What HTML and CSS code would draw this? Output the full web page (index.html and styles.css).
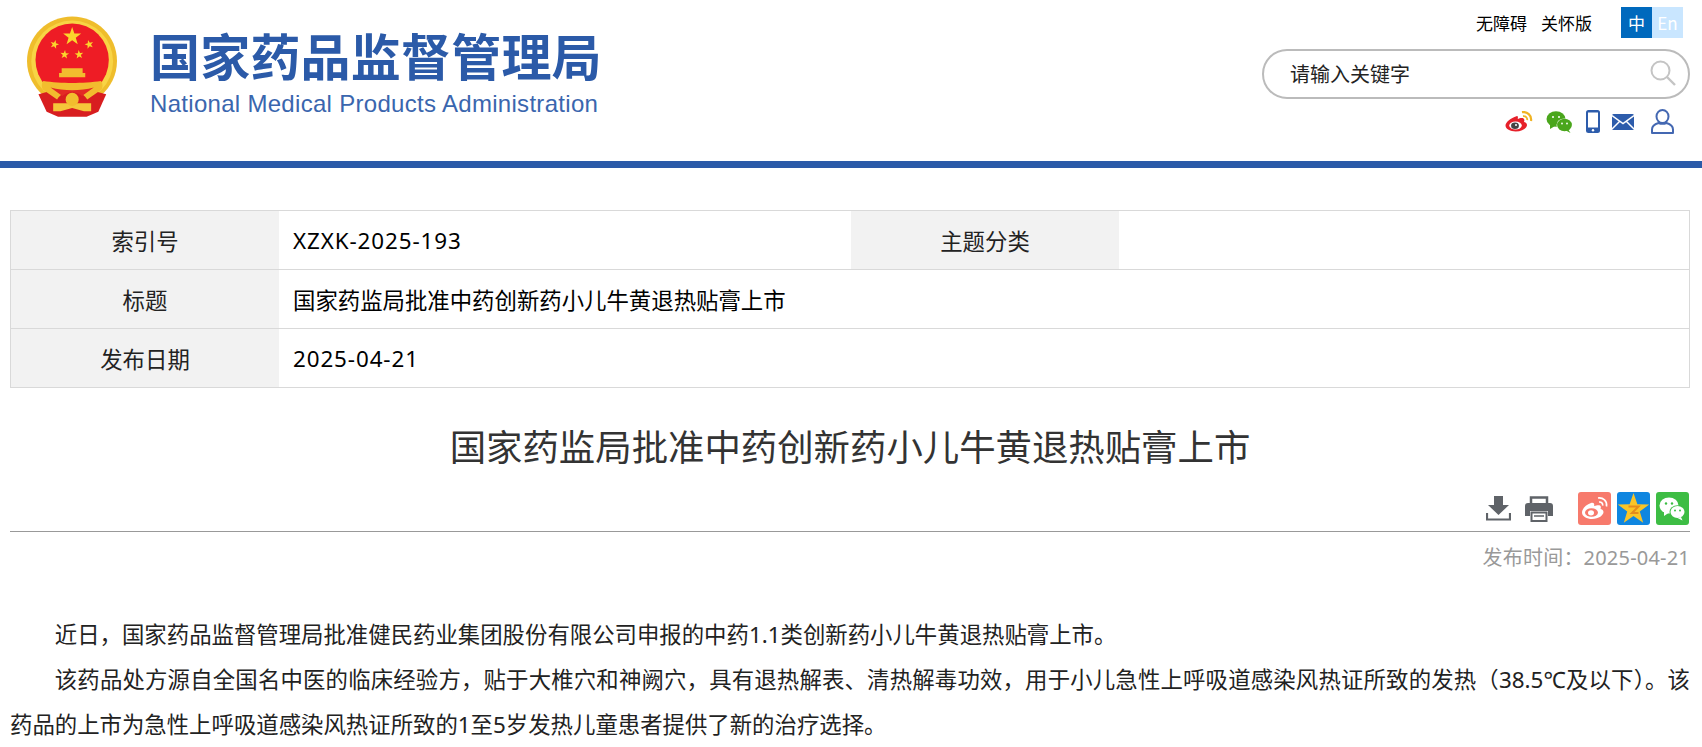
FILE: index.html
```
<!DOCTYPE html>
<html lang="zh-CN">
<head>
  <meta charset="utf-8">
  <title>国家药监局批准中药创新药小儿牛黄退热贴膏上市</title>
  <link rel="stylesheet" href="styles.css">
</head>
<body>
  <svg class="defs" width="0" height="0">
    <defs>
      <polygon id="star" points="0,-10 2.35,-3.24 9.51,-3.09 3.8,1.24 5.88,8.09 0,4 -5.88,8.09 -3.8,1.24 -9.51,-3.09 -2.35,-3.24"/>
    </defs>
  </svg>

  <div class="header">
    <div class="logo">
      <svg class="emblem" viewBox="40 38 275 307">
        <path d="M178 39c76 0 137 60 137 136 0 44-20 80-48 104H89c-28-24-49-60-49-104 0-76 62-136 138-136z" fill="#efbd2c"/>
        <circle cx="178" cy="176" r="125" fill="#f8d445"/>
        <circle cx="178" cy="172" r="112" fill="#ee1c25"/>
        <use href="#star" transform="translate(178,100) scale(2.9)" fill="#fbd62c"/>
        <use href="#star" transform="translate(124,124) scale(1.4) rotate(15)" fill="#fbd62c"/>
        <use href="#star" transform="translate(230,124) scale(1.4) rotate(-15)" fill="#fbd62c"/>
        <use href="#star" transform="translate(155,155) scale(1.4) rotate(5)" fill="#fbd62c"/>
        <use href="#star" transform="translate(199,155) scale(1.4) rotate(-5)" fill="#fbd62c"/>
        <path d="M146 197h64v14h8v13h-80v-13h8z" fill="#f2bd2e"/>
        <path d="M75 276 L100 330 L135 345 L222 345 L258 330 L282 276 L250 268 L178 262 L106 268Z" fill="#d81e20"/>
        <path d="M90 236c25 4 60 6 88 6s63-2 88-6c6 6 6 18 2 26l-44 30c-8-14-26-24-46-24s-38 10-46 24l-44-30c-4-8-4-20 2-26z" fill="#f2bd2e"/>
        <path d="M112 256c20 6 44 8 66 8s46-2 66-8l-36 26c-8-8-18-12-30-12s-22 4-30 12z" fill="#e32a25"/>
        <path d="M120 304h116v24h-22l-36-10-36 10h-22z" fill="#f5c73a"/>
        <circle cx="178" cy="292" r="20" fill="#f2bd2e"/>
      </svg>
      <div class="logo-text">
        <div class="logo-cn">国家药品监督管理局</div>
        <div class="logo-en">National Medical Products Administration</div>
      </div>
    </div>

    <div class="tools">
      <div class="top-links">
        <a>无障碍</a>
        <a>关怀版</a>
        <div class="lang">
          <span class="lang-cn">中</span><span class="lang-en">En</span>
        </div>
      </div>
      <div class="search">
        <span>请输入关键字</span>
        <svg class="search-icon" viewBox="0 0 26 26">
          <circle cx="10.5" cy="10.5" r="9" fill="none" stroke="#c4c4c4" stroke-width="2"/>
          <path d="M17 17l8 8" stroke="#c4c4c4" stroke-width="2.4"/>
        </svg>
      </div>
      <div class="social">
        <svg class="ico-weibo" viewBox="0 0 28 21">
          <path d="M11.5 5.2C6 6.800 .5 11 .5 14.600c0 3.600 5 5.900 10.200 5.900 6.800 0 11.300-3.600 11.300-6.600 0-2-2-2.700-3-3 .6-1.500.5-2.700-.4-3.400-1.500-1-4-.3-5.500.4-.3.100-.4 0-.3-.4.400-1.800-.3-3.100-1.300-2.300z" fill="#e6202a"/>
          <ellipse cx="10.500" cy="14.500" rx="6.300" ry="4" fill="#fff"/>
          <ellipse cx="10" cy="14.800" rx="3.900" ry="3.200" fill="#444"/>
          <circle cx="11" cy="14" r="1" fill="#fff"/>
          <path d="M17 1.200c5-.9 10 3 9 8.800" fill="none" stroke="#f0b323" stroke-width="2.200"/>
          <path d="M18 5.200c2.500-.4 4.600 1.500 4.200 4" fill="none" stroke="#f0b323" stroke-width="1.800"/>
        </svg>
        <svg class="ico-wechat" viewBox="0 0 27 22">
          <ellipse cx="10" cy="8" rx="9.500" ry="7.800" fill="#4aa61c"/>
          <path d="M4 13l0 5 5-3z" fill="#4aa61c"/>
          <ellipse cx="18.500" cy="14" rx="8" ry="6.600" fill="#fff"/>
          <ellipse cx="18.500" cy="14" rx="7.400" ry="6.200" fill="#4aa61c"/>
          <path d="M22 18l2.500 4-5.500-3z" fill="#4aa61c"/>
          <circle cx="7" cy="6" r="1" fill="#fff"/><circle cx="13" cy="6" r="1" fill="#fff"/>
          <circle cx="16" cy="12.500" r=".9" fill="#fff"/><circle cx="21" cy="12.500" r=".9" fill="#fff"/>
        </svg>
        <svg class="ico-phone" viewBox="0 0 14 23">
          <rect width="14" height="23" rx="2.500" fill="#2d5cab"/>
          <rect x="2" y="2.500" width="10" height="15" fill="#fff"/>
          <circle cx="7" cy="20.200" r="1.200" fill="#fff"/>
        </svg>
        <svg class="ico-mail" viewBox="0 0 22 16">
          <rect width="22" height="16" rx="1.500" fill="#2d5cab"/>
          <path d="M0 1.500l11 8 11-8M0 15l7.500-7.500M22 15l-7.500-7.500" fill="none" stroke="#fff" stroke-width="1.500"/>
        </svg>
        <svg class="ico-user" viewBox="0 0 23 25">
          <ellipse cx="11.500" cy="7.500" rx="6" ry="6.500" fill="none" stroke="#4468b2" stroke-width="2"/>
          <path d="M1 24v-3.500c0-3.500 3-5.500 6.500-6.500 2.500 1 5.500 1 8 0 3.500 1 6.500 3 6.500 6.500V24z" fill="none" stroke="#4468b2" stroke-width="2" stroke-linejoin="round"/>
        </svg>
      </div>
    </div>
  </div>

  <div class="main">
    <table class="info">
      <tr>
        <td class="label">索引号</td>
        <td class="value col-one latin">XZXK-2025-193</td>
        <td class="label">主题分类</td>
        <td class="value"></td>
      </tr>
      <tr>
        <td class="label">标题</td>
        <td class="value" colspan="3">国家药监局批准中药创新药小儿牛黄退热贴膏上市</td>
      </tr>
      <tr>
        <td class="label">发布日期</td>
        <td class="value latin" colspan="3">2025-04-21</td>
      </tr>
    </table>

    <h1 class="title">国家药监局批准中药创新药小儿牛黄退热贴膏上市</h1>

    <div class="share">
      <svg class="ico-down" viewBox="0 0 25 25">
        <path d="M8 0h9v9h6L12.500 19 2 9h6z" fill="#5f6368"/>
        <path d="M1 17v6.500h23V17" fill="none" stroke="#5f6368" stroke-width="2.200"/>
      </svg>
      <svg class="ico-print" viewBox="0 0 28 26">
        <path d="M6 7V1.500h16V7" fill="none" stroke="#5f6368" stroke-width="2.500"/>
        <path d="M3 7h22a3 3 0 0 1 3 3v10h-5v-5H5v5H0V10a3 3 0 0 1 3-3z" fill="#5f6368"/>
        <rect x="6.500" y="16.500" width="15" height="8.500" fill="#fff" stroke="#5f6368" stroke-width="2"/>
        <path d="M9 20h10" stroke="#5f6368" stroke-width="1.500"/>
      </svg>
      <div class="tiles">
        <span class="tile tile-weibo">
          <svg viewBox="0 0 33 33">
            <path d="M13 11C8 12.500 4 17 4 20.500 4 24.500 9 27 14 27c7 0 11.500-4 11.500-7 0-2-2-2.800-3-3 .6-1.500.5-3-.5-3.500-1.500-.8-4 0-5.500.5-.3.100-.4-.1-.3-.5.400-2-1-3.500-3.200-2.500z" fill="#fff"/>
            <ellipse cx="13.500" cy="20.500" rx="6.500" ry="4.300" fill="#f77a6c"/>
            <ellipse cx="13" cy="20.800" rx="3" ry="2.600" fill="#fff"/>
            <path d="M20 6c5-.7 9.500 3 8.500 8.500M21 10c2.500-.3 4 1.500 3.700 3.700" fill="none" stroke="#fff" stroke-width="1.600"/>
          </svg>
        </span>
        <span class="tile tile-qzone">
          <svg viewBox="0 0 33 33">
            <use href="#star" transform="translate(16.500,17.500) scale(1.650)" fill="#f9c528"/>
            <path d="M11.500 14.500h10l-6.500 6.500h6.500" fill="none" stroke="#e58b1c" stroke-width="2"/>
          </svg>
        </span>
        <span class="tile tile-wechat">
          <svg viewBox="0 0 33 33">
            <ellipse cx="13" cy="13.500" rx="9.500" ry="8" fill="#fff"/>
            <path d="M8 19v5l4.500-3z" fill="#fff"/>
            <ellipse cx="21.500" cy="20" rx="8" ry="6.700" fill="#3dbd44"/>
            <ellipse cx="21.500" cy="20" rx="7" ry="5.900" fill="#fff"/>
            <path d="M25 25l1.500 3.500-5-2.500z" fill="#fff"/>
            <circle cx="10" cy="11.500" r="1.200" fill="#3dbd44"/><circle cx="16" cy="11.500" r="1.200" fill="#3dbd44"/>
            <circle cx="19" cy="18.500" r="1" fill="#3dbd44"/><circle cx="24" cy="18.500" r="1" fill="#3dbd44"/>
          </svg>
        </span>
      </div>
    </div>

    <div class="pub-date">发布时间：2025-04-21</div>

    <div class="article">
      <p>近日，国家药品监督管理局批准健民药业集团股份有限公司申报的中药1.1类创新药小儿牛黄退热贴膏上市。</p>
      <p>该药品处方源自全国名中医的临床经验方，贴于大椎穴和神阙穴，具有退热解表、清热解毒功效，用于小儿急性上呼吸道感染风热证所致的发热（38.5℃及以下）。该药品的上市为急性上呼吸道感染风热证所致的1至5岁发热儿童患者提供了新的治疗选择。</p>
    </div>
  </div>
</body>
</html>
```

FILE: styles.css
```
body {
  margin: 0;
  background: #fff;
  color: #000;
  font-family: "Noto Sans", "Noto Sans CJK SC", sans-serif;
}

.defs {
  display: block;
  height: 0;
}

.header {
  height: 161px;
  border-bottom: 7px solid #2b5aa8;
  display: flex;
  justify-content: space-between;
}

.logo {
  display: flex;
  padding: 16px 0 0 27px;
}

.emblem {
  width: 90px;
  height: 101px;
}

.logo-text {
  margin-left: 33px;
  padding-top: 8px;
}

.logo-cn {
  font-family: "Noto Sans CJK SC", sans-serif;
  font-size: 50px;
  font-weight: 700;
  line-height: 60px;
  letter-spacing: .2px;
  color: #2b5aa8;
  white-space: nowrap;
}

.logo-en {
  font-family: "Liberation Sans", sans-serif;
  font-size: 24px;
  line-height: 28px;
  letter-spacing: .3px;
  margin-top: 6px;
  color: #3a66ae;
  white-space: nowrap;
}

.tools {
  width: 428px;
  margin-right: 12px;
  padding-top: 7px;
  display: flex;
  flex-direction: column;
}

.top-links {
  display: flex;
  justify-content: flex-end;
  align-items: center;
  height: 31px;
  font-family: "Noto Sans CJK SC", sans-serif;
  font-size: 17px;
}

.top-links a {
  margin-right: 14px;
}

.lang {
  display: flex;
  margin-left: 15px;
  margin-right: 7px;
  line-height: 31px;
}

.lang span {
  width: 31px;
  text-align: center;
  color: #fff;
}

.lang-cn {
  background: #0069bd;
}

.lang-en {
  background: #c9e6ff;
}

.search {
  height: 50px;
  margin-top: 11px;
  box-sizing: border-box;
  border: 2px solid #bbb;
  border-radius: 25px;
  padding: 0 12px 2px 26px;
  display: flex;
  align-items: center;
  justify-content: space-between;
  font-family: "Noto Sans CJK SC", sans-serif;
  font-size: 20px;
  color: #222;
}

.search-icon {
  width: 26px;
  height: 26px;
}

.social {
  display: flex;
  justify-content: flex-end;
  align-items: center;
  height: 25px;
  margin-top: 10px;
  padding-right: 16px;
}

.ico-weibo {
  width: 28px;
  height: 21px;
}

.ico-wechat {
  width: 27px;
  height: 22px;
  margin-left: 13px;
}

.ico-phone {
  width: 14px;
  height: 23px;
  margin-left: 13px;
}

.ico-mail {
  width: 22px;
  height: 16px;
  margin-left: 12px;
}

.ico-user {
  width: 23px;
  height: 25px;
  margin-left: 17px;
}

.main {
  margin: 42px 12px 0 10px;
}

.info {
  width: 100%;
  border-collapse: collapse;
  table-layout: fixed;
  border: 1px solid #d9d9d9;
  font-size: 22.4px;
}

.info tr {
  height: 59px;
  border-top: 1px solid #d9d9d9;
}

.info td {
  padding: 0;
}

.label {
  width: 268px;
  background: #f2f2f2;
  text-align: center;
  color: #222;
}

.info td.value {
  padding-left: 14px;
}

.info td.latin {
  letter-spacing: .9px;
}

.col-one {
  width: 558px;
}

.title {
  margin: 29px 0 0;
  font-size: 36.4px;
  font-weight: 400;
  line-height: 60px;
  text-align: center;
  color: #333;
}

.share {
  height: 35px;
  margin-top: 14px;
  display: flex;
  justify-content: flex-end;
  align-items: center;
  border-bottom: 1px solid #999;
  padding-bottom: 5px;
}

.ico-down {
  width: 25px;
  height: 25px;
}

.ico-print {
  width: 28px;
  height: 26px;
  margin-left: 14px;
}

.tiles {
  display: flex;
  gap: 6px;
  margin-left: 25px;
  margin-right: 1px;
}

.tile {
  width: 33px;
  height: 33px;
  border-radius: 3px;
  display: block;
}

.tile svg {
  display: block;
}

.tile-weibo {
  background: #f77a6c;
}

.tile-qzone {
  background: #0f86e0;
}

.tile-wechat {
  background: #3dbd44;
}

.pub-date {
  margin-top: 11px;
  text-align: right;
  font-size: 20px;
  line-height: 30px;
  letter-spacing: .2px;
  color: #999;
}

.article {
  margin-top: 40px;
  font-size: 22.4px;
  line-height: 44.8px;
}

.article p {
  margin: 0;
  text-indent: 2em;
  text-align: justify;
  color: #222;
}
```
